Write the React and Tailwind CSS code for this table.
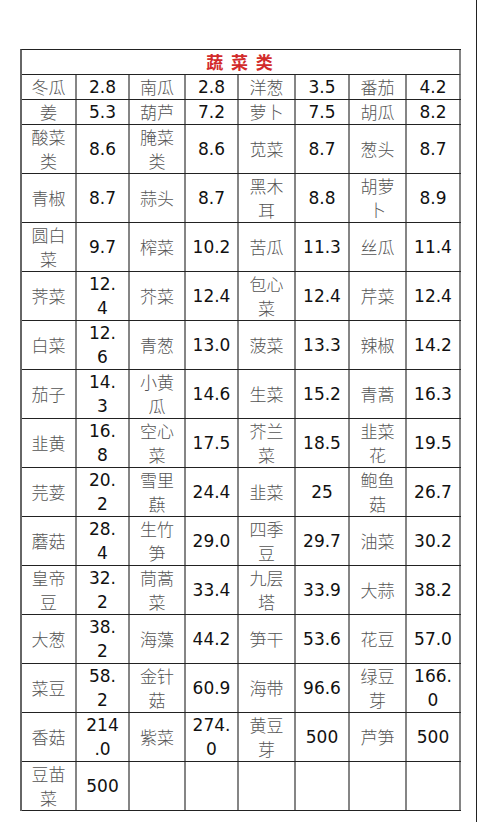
import React from "react";

const rows = [
  [["冬瓜"], ["2.8"], ["南瓜"], ["2.8"], ["洋葱"], ["3.5"], ["番茄"], ["4.2"]],
  [["姜"], ["5.3"], ["葫芦"], ["7.2"], ["萝卜"], ["7.5"], ["胡瓜"], ["8.2"]],
  [["酸菜", "类"], ["8.6"], ["腌菜", "类"], ["8.6"], ["苋菜"], ["8.7"], ["葱头"], ["8.7"]],
  [["青椒"], ["8.7"], ["蒜头"], ["8.7"], ["黑木", "耳"], ["8.8"], ["胡萝", "卜"], ["8.9"]],
  [["圆白", "菜"], ["9.7"], ["榨菜"], ["10.2"], ["苦瓜"], ["11.3"], ["丝瓜"], ["11.4"]],
  [["荠菜"], ["12.", "4"], ["芥菜"], ["12.4"], ["包心", "菜"], ["12.4"], ["芹菜"], ["12.4"]],
  [["白菜"], ["12.", "6"], ["青葱"], ["13.0"], ["菠菜"], ["13.3"], ["辣椒"], ["14.2"]],
  [["茄子"], ["14.", "3"], ["小黄", "瓜"], ["14.6"], ["生菜"], ["15.2"], ["青蒿"], ["16.3"]],
  [["韭黄"], ["16.", "8"], ["空心", "菜"], ["17.5"], ["芥兰", "菜"], ["18.5"], ["韭菜", "花"], ["19.5"]],
  [["芫荽"], ["20.", "2"], ["雪里", "蕻"], ["24.4"], ["韭菜"], ["25"], ["鲍鱼", "菇"], ["26.7"]],
  [["蘑菇"], ["28.", "4"], ["生竹", "笋"], ["29.0"], ["四季", "豆"], ["29.7"], ["油菜"], ["30.2"]],
  [["皇帝", "豆"], ["32.", "2"], ["茼蒿", "菜"], ["33.4"], ["九层", "塔"], ["33.9"], ["大蒜"], ["38.2"]],
  [["大葱"], ["38.", "2"], ["海藻"], ["44.2"], ["笋干"], ["53.6"], ["花豆"], ["57.0"]],
  [["菜豆"], ["58.", "2"], ["金针", "菇"], ["60.9"], ["海带"], ["96.6"], ["绿豆", "芽"], ["166.", "0"]],
  [["香菇"], ["214", ".0"], ["紫菜"], ["274.", "0"], ["黄豆", "芽"], ["500"], ["芦笋"], ["500"]],
  [["豆苗", "菜"], ["500"], [], [], [], [], [], []],
];

const widths = ["w-[55px]", "w-[53px]", "w-[56px]", "w-[53px]", "w-[57px]", "w-[54px]", "w-[57px]", "w-[54px]"];

function Cell({ lines, idx, tall }) {
  const isNum = idx % 2 === 1;
  return (
    <div
      className={`${widths[idx]} shrink-0 border-r-2 border-[#858585] flex flex-col items-center justify-center ${
        tall ? "h-[48px]" : "h-[24px]"
      } ${
        isNum
          ? "text-[17px] text-[#111] font-['DejaVu_Sans',sans-serif]"
          : "text-[17px] text-[#555] font-light font-['Noto_Sans_CJK_SC',sans-serif]"
      }`}
    >
      {lines.map((l, i) => (
        <div key={i} className="leading-[24px] whitespace-nowrap">
          {l}
        </div>
      ))}
    </div>
  );
}

export default function App() {
  return (
    <div className="w-[477px] min-h-[822px] bg-white border-r border-[#222] pt-[49px] pl-[20px]">
      <div className="w-[441px] border-t border-l-2 border-t-[#222] border-l-[#666]">
        <div className="h-[25px] border-b border-[#222] border-r-2 border-r-[#858585] flex items-center justify-center">
          <span className="text-[17px] font-bold text-[#d22b2b] tracking-[2px] font-['Noto_Sans_CJK_SC',sans-serif] leading-[24px]">
            蔬 菜 类
          </span>
        </div>
        {rows.map((r, ri) => (
          <div key={ri} className="flex border-b border-[#222]">
            {r.map((c, ci) => (
              <Cell key={ci} lines={c} idx={ci} tall={ri >= 2} />
            ))}
          </div>
        ))}
      </div>
    </div>
  );
}
